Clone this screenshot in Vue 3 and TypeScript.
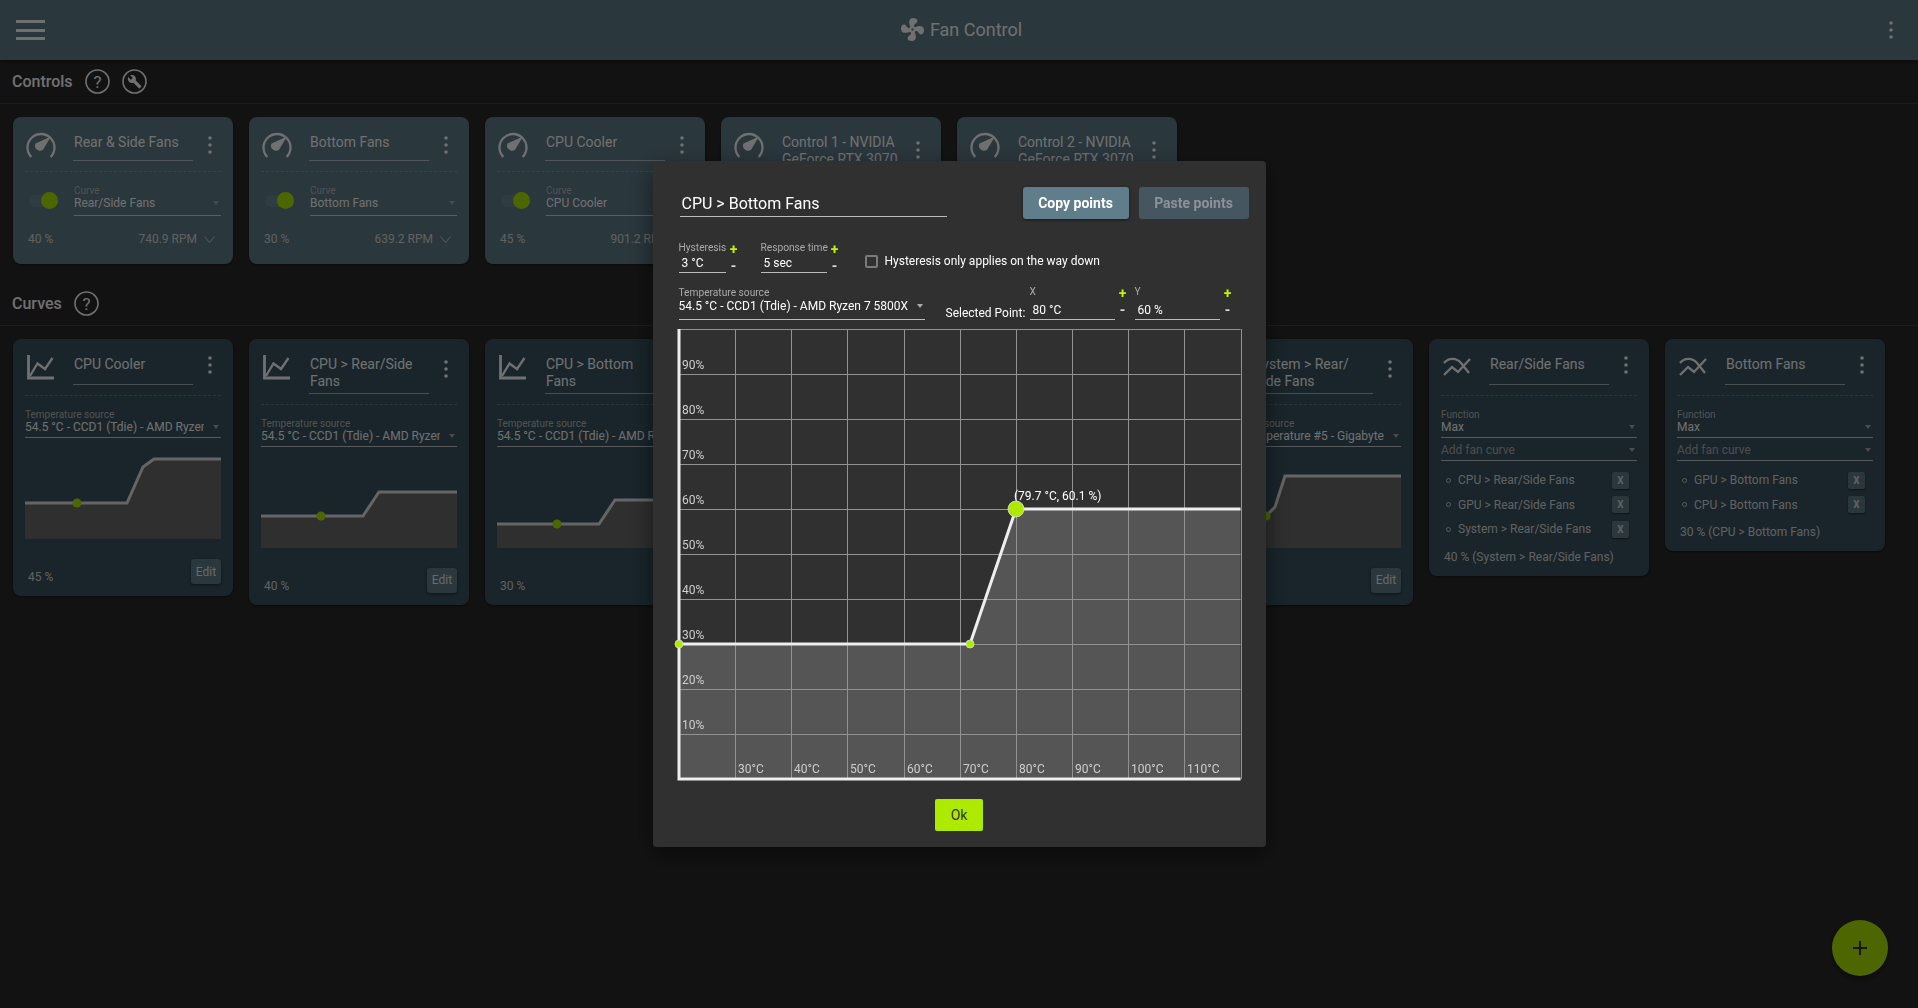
<template>
  <div class="app">
    <header class="topbar">
      <button class="burger"><span /><span /><span /></button>
      <div class="title">
        <svg class="fan" viewBox="2 2 20 20"><path :d="fanPath" /></svg>
        <span>Fan Control</span>
      </div>
      <svg class="dots top-dots" viewBox="0 0 6 20"><circle cx="3" cy="3" r="1.8" /><circle cx="3" cy="10" r="1.8" /><circle cx="3" cy="17" r="1.8" /></svg>
    </header>

    <section>
      <div class="section-head">
        <h2>Controls</h2>
        <svg class="round-icon" viewBox="0 0 25 25"><circle cx="12.5" cy="12.5" r="11.5" /><text x="12.5" y="18.5" text-anchor="middle">?</text></svg>
        <svg class="round-icon" viewBox="0 0 25 25"><circle cx="12.5" cy="12.5" r="11.5" /><path class="wrench" :d="wrenchPath" transform="translate(5.2 5.2) scale(0.62)" /></svg>
      </div>
      <div class="card-row controls-row">
        <article v-for="c in controls" :key="c.name" class="card card-control">
          <div class="head">
            <svg class="kind-icon" viewBox="0 0 28 24">
              <path class="line" d="M4.4 24A13.5 13.5 0 1 1 23.6 24" />
              <path class="solid" d="M24 3.5L16.2 16.5A5 5 0 0 1 8.5 10.5Z" />
            </svg>
            <div class="name">{{ c.name }}</div>
            <svg class="dots" viewBox="0 0 6 20"><circle cx="3" cy="3" r="1.8" /><circle cx="3" cy="10" r="1.8" /><circle cx="3" cy="17" r="1.8" /></svg>
          </div>
          <div class="control-body">
            <div class="toggle"><i /></div>
            <div class="field">
              <label>Curve</label>
              <div class="select"><span>{{ c.curve }}</span><b /></div>
            </div>
          </div>
          <div class="control-foot">
            <span>{{ c.pct }}</span>
            <span class="rpm">{{ c.rpm }}</span>
            <svg class="chev" viewBox="0 0 11 7"><path d="M0.5 0.5L5.5 6.5L10.5 0.5" /></svg>
          </div>
        </article>
      </div>
    </section>

    <section>
      <div class="section-head">
        <h2>Curves</h2>
        <svg class="round-icon" viewBox="0 0 25 25"><circle cx="12.5" cy="12.5" r="11.5" /><text x="12.5" y="18.5" text-anchor="middle">?</text></svg>
      </div>
      <div class="card-row">
        <article v-for="c in curves" :key="c.name" class="card">
          <div class="head">
            <svg class="kind-icon" viewBox="0 0 28 24">
              <path class="line axis" d="M1.5 0V23H27" />
              <path class="line" d="M3 21L10.5 8.5L18 14L25.5 3" />
            </svg>
            <div class="name">{{ c.name }}</div>
            <svg class="dots" viewBox="0 0 6 20"><circle cx="3" cy="3" r="1.8" /><circle cx="3" cy="10" r="1.8" /><circle cx="3" cy="17" r="1.8" /></svg>
          </div>
          <div class="field body-field">
            <label>Temperature source</label>
            <div class="select"><span>{{ c.source }}</span><b /></div>
          </div>
          <svg class="mini" width="196" height="80" viewBox="0 0 196 80">
            <polygon :points="c.points + ' 196,80 0,80'" class="mini-fill" />
            <polyline :points="c.points" class="mini-line" />
            <circle :cx="c.dotX" :cy="c.dotY" r="4.5" class="mini-dot" />
          </svg>
          <div class="curve-foot">
            <span>{{ c.pct }}</span>
            <button class="edit">Edit</button>
          </div>
        </article>
        <article v-for="m in mixes" :key="m.name" class="card card-mix">
          <div class="head">
            <svg class="kind-icon mix-icon" viewBox="0 0 28 20">
              <path class="line" d="M1 6C5 1 13 0 18 6L26 16" />
              <path class="line" d="M1 18L9 10L15 15L27 2" />
            </svg>
            <div class="name">{{ m.name }}</div>
            <svg class="dots" viewBox="0 0 6 20"><circle cx="3" cy="3" r="1.8" /><circle cx="3" cy="10" r="1.8" /><circle cx="3" cy="17" r="1.8" /></svg>
          </div>
          <div class="field body-field">
            <label>Function</label>
            <div class="select"><span>Max</span><b /></div>
          </div>
          <div class="field add-field">
            <div class="select dim"><span>Add fan curve</span><b /></div>
          </div>
          <ul class="mix-list">
            <li v-for="item in m.items" :key="item">
              <i /><span>{{ item }}</span><button class="x">X</button>
            </li>
          </ul>
          <div class="mix-result">{{ m.result }}</div>
        </article>
      </div>
    </section>

    <button class="fab">
      <svg viewBox="0 0 14 14" width="14" height="14"><path d="M7 0V14M0 7H14" /></svg>
    </button>

    <div class="scrim">
      <div class="modal">
        <div class="modal-top">
          <div class="modal-title">CPU &gt; Bottom Fans</div>
          <div class="modal-actions">
            <button class="btn-copy">Copy points</button>
            <button class="btn-paste">Paste points</button>
          </div>
        </div>

        <div class="modal-row settings">
          <div class="num small">
            <div class="num-box">
              <label>Hysteresis</label>
              <div class="num-value">3 °C</div>
            </div>
            <div class="steppers"><em>+</em><em class="minus">-</em></div>
          </div>
          <div class="num medium">
            <div class="num-box">
              <label>Response time</label>
              <div class="num-value">5 sec</div>
            </div>
            <div class="steppers"><em>+</em><em class="minus">-</em></div>
          </div>
          <div class="check">
            <i />
            <span>Hysteresis only applies on the way down</span>
          </div>
        </div>

        <div class="modal-row points">
          <div class="field source">
            <label>Temperature source</label>
            <div class="select"><span>54.5 °C - CCD1 (Tdie) - AMD Ryzen 7 5800X</span><b /></div>
          </div>
          <div class="selected">Selected Point:</div>
          <div class="num coord">
            <div class="num-box">
              <label>X</label>
              <div class="num-value">80 °C</div>
            </div>
            <div class="steppers"><em>+</em><em class="minus">-</em></div>
          </div>
          <div class="num coord">
            <div class="num-box">
              <label>Y</label>
              <div class="num-value">60 %</div>
            </div>
            <div class="steppers"><em>+</em><em class="minus">-</em></div>
          </div>
        </div>

        <svg class="graph" width="562" height="450" viewBox="0 0 562 450">
          <polygon class="graph-fill" :points="graphPoints + ' 561.5,450 0,450'" />
          <line v-for="x in gridX" :key="'x' + x" class="grid" :x1="x" :x2="x" y1="0" y2="450" />
          <line v-for="y in gridY" :key="'y' + y" class="grid" x1="0" x2="561.5" :y1="y" :y2="y" />
          <text v-for="l in percentLabels" :key="l.text" class="axis-label" x="3" :y="l.y">{{ l.text }}</text>
          <text v-for="l in tempLabels" :key="l.text" class="axis-label" :x="l.x" y="444">{{ l.text }}</text>
          <path class="frame" d="M0 0V450H561.5" />
          <polyline class="graph-line" :points="graphPoints" />
          <text class="tip" x="335" y="171">(79.7 °C, 60.1 %)</text>
          <circle class="pt" cx="0" cy="315" r="4" />
          <circle class="pt" cx="291" cy="315" r="4" />
          <circle class="pt" cx="337" cy="180" r="8" />
        </svg>

        <button class="ok">Ok</button>
      </div>
    </div>
  </div>
</template>

<script setup lang="ts">
const fanPath =
  'M12,11A1,1 0 0,0 11,12A1,1 0 0,0 12,13A1,1 0 0,0 13,12A1,1 0 0,0 12,11M12.5,2C17,2 17.11,5.57 14.75,6.75C13.76,7.24 13.32,8.29 13.13,9.22C13.61,9.42 14.03,9.73 14.35,10.13C18.05,8.13 22.03,8.92 22.03,12.5C22.03,17 18.46,17.1 17.28,14.73C16.78,13.74 15.72,13.3 14.79,13.11C14.59,13.59 14.28,14 13.88,14.34C15.87,18.03 15.08,22 11.5,22C7,22 6.91,18.42 9.27,17.24C10.25,16.75 10.69,15.71 10.89,14.79C10.4,14.59 9.97,14.27 9.65,13.87C5.96,15.85 2,15.07 2,11.5C2,7 5.56,6.89 6.74,9.26C7.24,10.25 8.29,10.68 9.22,10.87C9.41,10.39 9.73,9.97 10.14,9.65C8.15,5.96 8.94,2 12.5,2Z'
const wrenchPath =
  'M22.7 19l-9.1-9.1c.9-2.3.4-5-1.5-6.9-2-2-5-2.4-7.4-1.3L9 6 6 9 1.6 4.7C.4 7.1.9 10.1 2.9 12.1c1.9 1.9 4.6 2.4 6.9 1.5l9.1 9.1c.4.4 1 .4 1.4 0l2.3-2.3c.5-.4.5-1.1.1-1.4z'

const cpuSource = '54.5 °C - CCD1 (Tdie) - AMD Ryzen 7 5800X'

const controls = [
  { name: 'Rear & Side Fans', curve: 'Rear/Side Fans', pct: '40 %', rpm: '740.9 RPM' },
  { name: 'Bottom Fans', curve: 'Bottom Fans', pct: '30 %', rpm: '639.2 RPM' },
  { name: 'CPU Cooler', curve: 'CPU Cooler', pct: '45 %', rpm: '901.2 RPM' },
  { name: 'Control 1 - NVIDIA GeForce RTX 3070', curve: 'None', pct: '0 %', rpm: '0 RPM' },
  { name: 'Control 2 - NVIDIA GeForce RTX 3070', curve: 'None', pct: '0 %', rpm: '0 RPM' }
]

const curves = [
  { name: 'CPU Cooler', source: cpuSource, pct: '45 %', points: '0,44 102,44 118,8 129,0 196,0', dotX: 52, dotY: 44 },
  { name: 'CPU > Rear/Side Fans', source: cpuSource, pct: '40 %', points: '0,48 102,48 118,24 196,24', dotX: 60, dotY: 48 },
  { name: 'CPU > Bottom Fans', source: cpuSource, pct: '30 %', points: '0,56 102,56 118,32 196,32', dotX: 60, dotY: 56 },
  { name: 'GPU > Rear/Side Fans', source: '41 °C - GPU - NVIDIA GeForce RTX 3070', pct: '30 %', points: '0,56 102,56 118,32 196,32', dotX: 40, dotY: 56 },
  { name: 'GPU > Bottom Fans', source: '41 °C - GPU - NVIDIA GeForce RTX 3070', pct: '30 %', points: '0,56 102,56 118,32 196,32', dotX: 40, dotY: 56 },
  // the break opportunity keeps the wrap right after the slash
  { name: 'System > Rear/\u200bSide Fans', source: '38 °C - Temperature #5 - Gigabyte', pct: '40 %', points: '0,48 61,48 70,39 80,8 196,8', dotX: 61, dotY: 48 }
]

const mixes = [
  {
    name: 'Rear/Side Fans',
    items: ['CPU > Rear/Side Fans', 'GPU > Rear/Side Fans', 'System > Rear/Side Fans'],
    result: '40 % (System > Rear/Side Fans)'
  },
  {
    name: 'Bottom Fans',
    items: ['GPU > Bottom Fans', 'CPU > Bottom Fans'],
    result: '30 % (CPU > Bottom Fans)'
  }
]

const graphPoints = '0,315 291,315 337,180 561.5,180'
const cellW = 56.15
const gridX = Array.from({ length: 11 }, (_, i) => Math.round(i * cellW) + 0.5)
const gridY = Array.from({ length: 11 }, (_, i) => i * 45 + 0.5)
const percentLabels = Array.from({ length: 9 }, (_, i) => ({ text: `${90 - i * 10}%`, y: 40 + i * 45 }))
const tempLabels = Array.from({ length: 9 }, (_, i) => ({ text: `${30 + i * 10}°C`, x: Math.round((i + 1) * cellW) + 3 }))
</script>

<style>
html,
body {
  margin: 0;
  background: #2b2b2b;
  overflow: hidden;
}
</style>

<style scoped>
.app {
  min-height: 100vh;
  background: #2b2b2b;
  color: #fff;
  font-family: Roboto, "Liberation Sans", sans-serif;
  font-size: 12px;
}
button {
  font-family: inherit;
  border: 0;
  padding: 0;
  color: inherit;
}
.topbar {
  height: 60px;
  background: #607d8b;
  display: flex;
  align-items: center;
  justify-content: space-between;
  padding: 0 24px 0 16px;
  box-shadow: 0 2px 4px rgba(0, 0, 0, 0.4);
  position: relative;
}
.burger {
  width: 29px;
  background: none;
  display: flex;
  flex-direction: column;
  gap: 5.5px;
}
.burger span {
  height: 3px;
  background: #fff;
}
.title {
  display: flex;
  align-items: center;
  gap: 6px;
  font-size: 18px;
  margin-right: 10px;
  padding-bottom: 2px;
}
.fan {
  width: 23px;
  height: 23px;
  fill: #fff;
}
.dots {
  width: 6px;
  height: 20px;
  fill: #fff;
  flex: none;
}
.section-head {
  height: 43px;
  display: flex;
  align-items: center;
  gap: 12px;
  padding-left: 12px;
  border-bottom: 1px solid rgba(255, 255, 255, 0.12);
}
.section-head h2 {
  margin: 0 0 1px;
  font-size: 16px;
  font-weight: 500;
}
.round-icon {
  width: 25px;
  height: 25px;
  fill: none;
}
.round-icon circle {
  stroke: #fff;
  stroke-width: 1.6;
}
.round-icon text {
  fill: #fff;
  font-size: 17px;
  font-family: Roboto, sans-serif;
}
.round-icon .wrench {
  fill: #fff;
}
.card-row {
  display: flex;
  align-items: flex-start;
  gap: 16px;
  padding: 13px 0 0 13px;
}
.controls-row {
  margin-bottom: 7.5px;
}
.card {
  width: 220px;
  box-sizing: border-box;
  padding: 0 12px 12px;
  background: #3a5562;
  border-radius: 8px;
  box-shadow: 0 1px 3px rgba(0, 0, 0, 0.5);
  flex: none;
}
.card-control {
  background: #607d8b;
  padding-bottom: 18px;
}
.head {
  display: flex;
  align-items: flex-start;
  padding: 5px 0 10px;
  border-bottom: 1px dashed rgba(255, 255, 255, 0.22);
}
.kind-icon {
  width: 28px;
  height: 24px;
  margin: 11px 18px 0 2px;
  flex: none;
  overflow: visible;
}
.line {
  fill: none;
  stroke: #fff;
  stroke-width: 2.3;
}
.axis {
  stroke-width: 2.8;
}
.solid {
  fill: #fff;
}
.mix-icon {
  height: 20px;
  margin-top: 13px;
}
.name {
  box-sizing: border-box;
  width: 120px;
  min-height: 41px;
  padding: 11.5px 0 3px 1px;
  border-bottom: 1px solid rgba(255, 255, 255, 0.55);
  font-size: 14px;
  line-height: 17px;
}
.head .dots {
  align-self: center;
  margin-left: 14px;
}
.card-control .name {
  min-height: 39px;
}
.card-control .head .dots {
  margin-top: 7px;
}
.field label {
  display: block;
  font-size: 10px;
  line-height: 12px;
  color: #bbb;
}
.select {
  display: flex;
  align-items: center;
  line-height: 14px;
  padding: 0 0 3px;
  border-bottom: 1px solid rgba(255, 255, 255, 0.7);
}
.select span {
  flex: 1;
  overflow: hidden;
  white-space: nowrap;
}
.select b {
  flex: none;
  margin: 0 2px 0 9px;
  width: 0;
  height: 0;
  border-left: 3.5px solid transparent;
  border-right: 3.5px solid transparent;
  border-top: 4px solid #aaa;
}
.select.dim span {
  color: #b0b0b0;
}
.control-body {
  display: flex;
  align-items: center;
  gap: 16px;
  margin-top: 13px;
}
.control-body .field {
  flex: 1;
  min-width: 0;
}
.control-body label {
  line-height: 11px;
}
.control-body .select {
  padding-bottom: 5px;
}
.toggle {
  position: relative;
  width: 29px;
  height: 12px;
  margin-left: 4px;
  border-radius: 6px;
  background: rgba(255, 255, 255, 0.1);
}
.toggle i {
  position: absolute;
  right: 0;
  top: -3px;
  width: 17px;
  height: 17px;
  border-radius: 50%;
  background: #aee900;
}
.control-foot {
  display: flex;
  align-items: center;
  margin-top: 16px;
  padding: 0 6px 0 3px;
  line-height: 14px;
  color: #ddd;
}
.rpm {
  margin-left: auto;
}
.chev {
  width: 11px;
  height: 7px;
  margin-left: 7px;
  fill: none;
  stroke: #ccc;
  stroke-width: 1;
}
.body-field {
  margin-top: 13px;
}
.body-field label {
  margin-bottom: -1px;
}
.mini {
  display: block;
  margin-top: 21px;
  overflow: visible;
}
.mini-fill {
  fill: #6b6b6b;
}
.mini-line {
  fill: none;
  stroke: #e6e6e6;
  stroke-width: 3;
}
.mini-dot {
  fill: #aee900;
}
.curve-foot {
  display: flex;
  justify-content: space-between;
  align-items: flex-end;
  margin-top: 20px;
  padding-left: 3px;
  line-height: 14px;
  color: #ddd;
}
.edit {
  width: 30px;
  height: 25px;
  border-radius: 3px;
  background: #607d8b;
  font-size: 12px;
  color: #eee;
  box-shadow: 0 1px 3px rgba(0, 0, 0, 0.5);
}
.add-field {
  margin-top: 5px;
}
.mix-list {
  list-style: none;
  margin: 7px 0 0;
  padding: 0 8px 0 5px;
}
.mix-list li {
  display: flex;
  align-items: center;
  height: 24.5px;
  color: #ddd;
}
.mix-list li i {
  width: 3px;
  height: 3px;
  margin-right: 7px;
  border: 1px solid #ccc;
  border-radius: 50%;
}
.mix-list li span {
  flex: 1;
}
.x {
  width: 17px;
  height: 17px;
  border-radius: 2px;
  background: #607d8b;
  font-size: 10px;
  font-weight: 700;
  box-shadow: 0 1px 2px rgba(0, 0, 0, 0.5);
}
.mix-result {
  margin-top: 8px;
  padding-left: 3px;
  line-height: 14px;
  color: #ddd;
}
.fab {
  position: fixed;
  right: 30px;
  bottom: 32px;
  width: 56px;
  height: 56px;
  border-radius: 50%;
  background: #b2e800;
  display: flex;
  align-items: center;
  justify-content: center;
  box-shadow: 0 3px 6px rgba(0, 0, 0, 0.4);
}
.fab path {
  stroke: #333;
  stroke-width: 2;
}
.scrim {
  position: fixed;
  inset: 0;
  background: rgba(0, 0, 0, 0.56);
  display: flex;
  align-items: center;
  justify-content: center;
}
.modal {
  box-sizing: border-box;
  width: 613px;
  height: 686px;
  padding: 26px 17px 16px 26px;
  background: #303030;
  border-radius: 4px;
  box-shadow: 0 8px 24px rgba(0, 0, 0, 0.5);
  display: flex;
  flex-direction: column;
}
.modal-top {
  display: flex;
  justify-content: space-between;
  height: 32px;
}
.modal-title {
  width: 267px;
  height: 30px;
  margin-left: 1px;
  box-sizing: border-box;
  padding: 8px 0 0 2px;
  font-size: 16px;
  line-height: 18px;
  border-bottom: 1px solid #bbb;
}
.modal-actions {
  display: flex;
  gap: 10px;
}
.modal-actions button {
  height: 32px;
  border-radius: 3px;
  font-size: 14px;
  font-weight: 700;
}
.btn-copy {
  width: 106px;
  background: #607d8b;
  color: #fff;
  box-shadow: 0 1px 3px rgba(0, 0, 0, 0.5);
}
.btn-paste {
  width: 110px;
  background: #465660;
  color: #8b9398;
}
.modal-row {
  display: flex;
  align-items: flex-end;
}
.settings {
  margin-top: 23px;
}
.points {
  margin-top: 13px;
}
.num {
  display: flex;
}
.num-box label {
  display: block;
  font-size: 10.2px;
  line-height: 12px;
  color: #aaa;
  white-space: nowrap;
}
.num-value {
  margin-top: 2px;
  padding: 0 0 2px 3px;
  line-height: 14px;
  border-bottom: 1px solid #bbb;
}
.steppers {
  display: flex;
  flex-direction: column;
  justify-content: space-between;
  align-items: center;
  width: 8px;
  margin-left: 4px;
}
.steppers em {
  font-style: normal;
  font-weight: 700;
  font-size: 14px;
  line-height: 14px;
  color: #c2f400;
}
.steppers em.minus {
  color: #ddd;
}
.small .num-box {
  width: 47px;
}
.medium .num-box {
  width: 66px;
}
.small {
  margin-right: 23px;
}
.medium {
  margin-right: 26px;
}
.check {
  display: flex;
  align-items: center;
  gap: 7px;
  margin-bottom: 5px;
}
.check i {
  box-sizing: border-box;
  width: 13px;
  height: 13px;
  border: 2px solid #7a7a7a;
  border-radius: 2px;
}
.source {
  width: 246px;
}
.source label {
  color: #aaa;
  font-size: 10.2px;
}
.source .select {
  padding-bottom: 6px;
  border-bottom-color: #bbb;
}
.selected {
  margin: 0 5px 0 21px;
  line-height: 14px;
  width: 79px;
  white-space: nowrap;
}
.coord {
  margin-right: 8px;
}
.coord .num-box {
  width: 85px;
}
.coord .num-box label {
  padding-bottom: 3px;
}
.coord .steppers {
  padding-bottom: 3px;
}
.graph {
  display: block;
  margin-top: 9px;
  overflow: visible;
  flex: none;
}
.graph-fill {
  fill: rgba(255, 255, 255, 0.18);
}
.grid {
  stroke: #929292;
  stroke-width: 1;
}
.axis-label {
  fill: #cfcfcf;
  font-size: 12px;
  font-family: Roboto, sans-serif;
}
.frame {
  fill: none;
  stroke: #eee;
  stroke-width: 3;
}
.graph-line {
  fill: none;
  stroke: #eee;
  stroke-width: 3;
}
.tip {
  fill: #fff;
  font-size: 12px;
  font-family: Roboto, sans-serif;
}
.pt {
  fill: #aee900;
  stroke: #ddd;
  stroke-width: 0.8;
}
.ok {
  align-self: center;
  width: 48px;
  height: 32px;
  margin: 20px 9px 0 0;
  border-radius: 2px;
  background: #aee900;
  color: #333;
  font-size: 14px;
  font-weight: 400;
}
</style>
